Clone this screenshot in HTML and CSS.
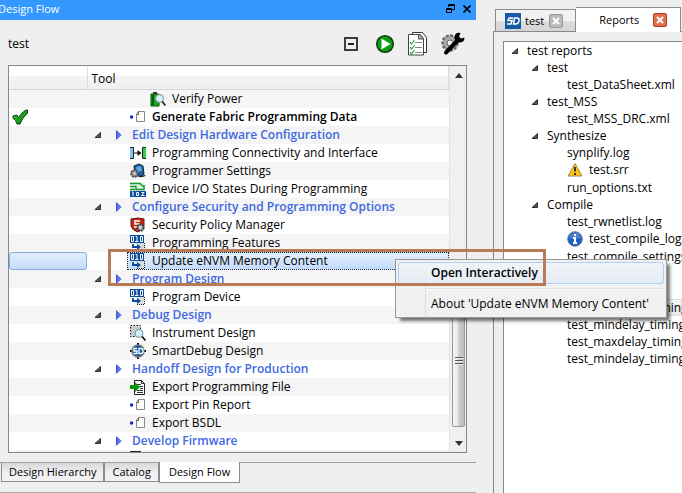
FILE: index.html
```html
<!DOCTYPE html>
<html lang="en">
<head>
<meta charset="utf-8">
<title>Design Flow</title>
<link rel="stylesheet" href="styles.css">
</head>
<body>
<svg class="defs" aria-hidden="true">
  <defs>
    <linearGradient id="tri" x1="0" x2="1"><stop offset="0" stop-color="#3f55e0"/><stop offset="1" stop-color="#7d97f0"/></linearGradient>
    <linearGradient id="leaf" x1="0" x2="1" y2="1"><stop offset="0" stop-color="#2fd02f"/><stop offset="1" stop-color="#067a06"/></linearGradient>
    <symbol id="i-exp" viewBox="0 0 8 8"><path d="M6.500 1.500v5H1z" fill="#555" stroke="#222" stroke-width=".9"/></symbol>
    <symbol id="i-tri" viewBox="0 0 8 12"><path d="M1 1l6 5-6 5z" fill="url(#tri)"/></symbol>
    <symbol id="i-file" viewBox="0 0 16 16"><circle cx="1.600" cy="8" r="1.700" fill="#1a24e8"/><path d="M8.500 2.500h6v10h-8v-8z" fill="#fff" stroke="#888"/><path d="M6.500 5.500h2v-3" fill="none" stroke="#555"/></symbol>
    <symbol id="i-power" viewBox="0 0 16 16"><path d="M1 3h8v12H1z" fill="#12b012" stroke="#0a4a0a"/><path d="M3 1h4v2H3z" fill="#333"/><path d="M3 4v10" stroke="#075f07" stroke-width="2"/><circle cx="9.500" cy="7.500" r="4" fill="#d6f1fb" stroke="#6f8f9b"/><path d="M12.300 10.500l3 4" stroke="#222" stroke-width="1.700"/></symbol>
    <symbol id="i-conn" viewBox="0 0 16 16"><path d="M0 2.500h3.500v11H0" fill="#7cc4f5" stroke="#222"/><path d="M16 2.500h-3.500v11H16" fill="#35cf45" stroke="#222"/><path d="M4 8h6" stroke="#111"/><path d="M7.500 5l4 3-4 3z" fill="#111"/></symbol>
    <symbol id="i-prog" viewBox="0 0 16 16"><path d="M4 3l5-2 4 2 1 8-3 3-6-2z" fill="#1b5fa8" stroke="#122"/><path d="M6 4l5-1 1 5-5 1z" fill="#5ea6e4"/><path d="M10 13q4 1 5-1" fill="none" stroke="#222" stroke-width="1.500"/><circle cx="4.500" cy="10.500" r="3.500" fill="#888" stroke="#444" stroke-width="1.500" stroke-dasharray="2 1"/><circle cx="4.500" cy="10.500" r="1.300" fill="#ddd"/></symbol>
    <symbol id="i-io" viewBox="0 0 16 16"><path d="M0 1h15v9H0z" fill="#e3f6e3"/><path d="M0 2.500h10l3 3M0 5.500h6v3h8V4M0 8.500h5" fill="none" stroke="#159a28" stroke-width="1.400"/><path d="M0 10h16v6H0z" fill="#0b4ea2"/><path d="M2 11h1v4M6.500 11.500h2v3h-2zM11.500 11.500h2.500l-2.500 3h3" stroke="#fff" fill="none"/></symbol>
    <symbol id="i-shield" viewBox="0 0 16 16"><path d="M1 2q7-2 13 0v7q-1 4-6.500 6Q2 13 1 9z" fill="#c92616" stroke="#5a1710"/><path d="M10 4H5v3h4v3H4" fill="none" stroke="#fff" stroke-width="1.500"/><circle cx="10.500" cy="10.500" r="3.300" fill="#999" stroke="#333" stroke-width="1.600" stroke-dasharray="2 .8"/><circle cx="10.500" cy="10.500" r="1.200" fill="#eee"/></symbol>
    <symbol id="i-bin" viewBox="0 0 16 16"><path d="M6.500 7.500h8v8h-8z" fill="#ddd"/><path d="M11 15.500h4M14.500 8v7M7 15.500h3" fill="none" stroke="#222" stroke-dasharray="1 1"/><path d="M0 0h14v8H0z" fill="#0b4b9c"/><path d="M1.500 1.500h2v5h-2zM5.500 1.500h1.500v5M5 6.500h3.500M10.500 1.500h2v5h-2z" fill="none" stroke="#fff"/><path d="M3 9v3h5" fill="none" stroke="#0b4b9c" stroke-width="1.800"/><path d="M7 9l4 3-4 3z" fill="#0b4b9c"/></symbol>
    <symbol id="i-inst" viewBox="0 0 16 16"><path d="M.5.5h10v11H.5z" fill="#ccc" stroke="#111" stroke-dasharray="1.500 1.500"/><circle cx="9" cy="8.500" r="4" fill="#d2f0fa" stroke="#7294a0"/><path d="M12 11.500l3.500 4" stroke="#111" stroke-width="1.800"/></symbol>
    <symbol id="i-sd" viewBox="0 0 16 16"><path d="M8 0v16M0 8h16" stroke="#111" stroke-width="2"/><circle cx="8" cy="8" r="6" fill="#0d5aa8" stroke="#777" stroke-width="1.600"/><path d="M7 5.500H4V8h3v2.500H3.500M9 5.500h2q2 0 2 2.500t-2 2.500H9z" fill="none" stroke="#fff" stroke-width="1.300"/></symbol>
    <symbol id="i-export" viewBox="0 0 16 16"><path d="M4.500 1.500h7l3 3v11h-10z" fill="#fff" stroke="#222"/><path d="M11.500 1.500v3h3M7 5.500h4M9 7.500h4M10 9.500h3M7 11.500h6M7 13.500h6" fill="none" stroke="#333"/><path d="M0 6h5V3l5 5-5 5v-3H0z" fill="#0a960f"/></symbol>
    <symbol id="i-check" viewBox="0 0 16 16"><path d="M1 7l4-1 1.500 2.500Q10 3 14 1h1.500v3Q10 9 8 15H5Q4 11 1 9z" fill="url(#leaf)" stroke="#0c3d0c"/></symbol>
    <symbol id="i-warn" viewBox="0 0 16 16"><path d="M8 1.500L15 14H1z" fill="#ffc414" stroke="#9c8a52" stroke-linejoin="round"/><path d="M8 5v4.500M8 11v2" stroke="#222" stroke-width="1.800"/></symbol>
    <symbol id="i-info" viewBox="0 0 16 16"><circle cx="8" cy="8" r="7.300" fill="#1d5fc4" stroke="#6a7f9c"/><path d="M2 7a6 5.500 0 0 1 12 0q-6 2-12 0z" fill="#fff" opacity=".2"/><path d="M8 3v2M6 7h2v5M6 12h4" fill="none" stroke="#fff" stroke-width="2"/></symbol>
  </defs>
</svg>
<main class="app">
  <section class="flow">
    <header class="titlebar">
      <h1>Design Flow</h1>
      <button aria-label="Float"><svg width="9" height="10" viewBox="0 0 9 10" fill="none" stroke="#000"><path d="M2.500 3V.5h6v5H6M2 1.500h7M.5 4.500h5v4h-5zM0 5.500h6"/></svg></button>
      <button aria-label="Close"><svg width="8" height="8" viewBox="0 0 8 8"><path d="M.5.5l7 7m0-7l-7 7" stroke="#000" stroke-width="1.600"/></svg></button>
    </header>
    <div class="toolbar">
      <span class="project">test</span>
      <button aria-label="Collapse all"><svg width="14" height="14" viewBox="0 0 14 14"><path d="M1 1h12v12H1z" fill="#efefef" stroke="#3d3d3d" stroke-width="2"/><path d="M4 7h6" stroke="#222" stroke-width="2"/></svg></button>
      <button aria-label="Run"><svg width="20" height="20" viewBox="0 0 20 20"><circle cx="10" cy="10" r="8.300" fill="#0b9d12" stroke="#123c14" stroke-width="1.600"/><path d="M6.500 4.500l9 5.500-9 5.500z" fill="#fff"/></svg></button>
      <button aria-label="Reports"><svg width="20" height="24" viewBox="0 0 20 24"><path d="M4.500.5h10l4 5v15h-14z" fill="#fff" stroke="#333"/><path d="M.5 2.500h12l3 4v16.500H.5z" fill="#fff" stroke="#444"/><path d="M10.500 2v5h5z" fill="#bbb" stroke="#555"/><path d="M7 10.500h7M7 15.500h7M7 20.500h7" stroke="#888"/><path d="M2 10l1.500 2L6.500 8M2 15l1.500 2L6.500 13M2 20l1.500 2L6.500 18" fill="none" stroke="#27a83a" stroke-width="1.200"/></svg></button>
      <button aria-label="Options"><svg width="24" height="24" viewBox="0 0 24 24"><circle cx="9" cy="11" r="7.500" fill="#aaa" stroke="#666" stroke-width="2.400" stroke-dasharray="3 1.400"/><circle cx="9" cy="11" r="3" fill="#efefef" stroke="#666"/><path d="M5 20.500L17 8" stroke="#000" stroke-width="4" stroke-linecap="round"/><path d="M19.500 1q-6-1-6 5 .5 4 5 4.500 5 0 5-5l-3.500 1-2-2z" fill="#000"/></svg></button>
    </div>
    <div class="tree">
      <table>
        <colgroup><col class="status"><col></colgroup>
        <thead><tr><th></th><th>Tool</th></tr></thead>
        <tbody>
          <tr><td></td><td><div class="node deep"><svg><use href="#i-power"/></svg>Verify Power</div></td></tr>
          <tr><td><svg class="check"><use href="#i-check"/></svg></td><td><div class="node leaf strong"><svg><use href="#i-file"/></svg>Generate Fabric Programming Data</div></td></tr>
          <tr><td></td><td><div class="node group"><svg><use href="#i-exp"/></svg><svg><use href="#i-tri"/></svg>Edit Design Hardware Configuration</div></td></tr>
          <tr><td></td><td><div class="node leaf"><svg><use href="#i-conn"/></svg>Programming Connectivity and Interface</div></td></tr>
          <tr><td></td><td><div class="node leaf"><svg><use href="#i-prog"/></svg>Programmer Settings</div></td></tr>
          <tr><td></td><td><div class="node leaf"><svg><use href="#i-io"/></svg>Device I/O States During Programming</div></td></tr>
          <tr><td></td><td><div class="node group"><svg><use href="#i-exp"/></svg><svg><use href="#i-tri"/></svg>Configure Security and Programming Options</div></td></tr>
          <tr><td></td><td><div class="node leaf"><svg><use href="#i-shield"/></svg>Security Policy Manager</div></td></tr>
          <tr><td></td><td><div class="node leaf"><svg><use href="#i-bin"/></svg>Programming Features</div></td></tr>
          <tr class="selected"><td><div class="cellmark"></div></td><td><div class="node leaf"><svg><use href="#i-bin"/></svg>Update eNVM Memory Content</div></td></tr>
          <tr><td></td><td><div class="node group"><svg><use href="#i-exp"/></svg><svg><use href="#i-tri"/></svg>Program Design</div></td></tr>
          <tr><td></td><td><div class="node leaf"><svg><use href="#i-bin"/></svg>Program Device</div></td></tr>
          <tr><td></td><td><div class="node group"><svg><use href="#i-exp"/></svg><svg><use href="#i-tri"/></svg>Debug Design</div></td></tr>
          <tr><td></td><td><div class="node leaf"><svg><use href="#i-inst"/></svg>Instrument Design</div></td></tr>
          <tr><td></td><td><div class="node leaf"><svg><use href="#i-sd"/></svg>SmartDebug Design</div></td></tr>
          <tr><td></td><td><div class="node group"><svg><use href="#i-exp"/></svg><svg><use href="#i-tri"/></svg>Handoff Design for Production</div></td></tr>
          <tr><td></td><td><div class="node leaf"><svg><use href="#i-export"/></svg>Export Programming File</div></td></tr>
          <tr><td></td><td><div class="node leaf"><svg><use href="#i-file"/></svg>Export Pin Report</div></td></tr>
          <tr><td></td><td><div class="node leaf"><svg><use href="#i-file"/></svg>Export BSDL</div></td></tr>
          <tr><td></td><td><div class="node group"><svg><use href="#i-exp"/></svg><svg><use href="#i-tri"/></svg>Develop Firmware</div></td></tr>
          <tr><td></td><td><div class="node leaf"><svg viewBox="0 0 16 16"><path d="M0 0h11v8H0z" fill="#222"/></svg></div></td></tr>
        </tbody>
      </table>
      <div class="scrollbar">
        <svg width="8" height="5" viewBox="0 0 8 5"><path d="M4 0l4 5H0z" fill="#333"/></svg>
        <div class="track"><div class="thumb"><i></i><i></i><i></i></div></div>
        <svg width="8" height="5" viewBox="0 0 8 5"><path d="M4 5l4-5H0z" fill="#333"/></svg>
      </div>
    </div>
    <nav class="bottom-tabs">
      <button>Design Hierarchy</button><button>Catalog</button><button class="active">Design Flow</button>
    </nav>
  </section>
  <section class="docs">
    <nav class="doc-tabs">
      <div class="tab"><svg width="16" height="16" viewBox="0 0 16 16"><path d="M0 0h16v16H0z" fill="#135ba8"/><path d="M8 5H4L3 7.500h4L6 11H2M9.500 5H12q2.500 0 2 3t-3.500 3H8.500z" fill="none" stroke="#fff" stroke-width="1.500"/></svg><a href="#test">test</a><button class="x" aria-label="Close test"><svg width="8" height="8" viewBox="0 0 8 8"><path d="M1 1l6 6m0-6L1 7" stroke="#fff" stroke-width="2"/></svg></button></div>
      <div class="tab active"><a href="#reports">Reports</a><button class="x" aria-label="Close Reports"><svg width="8" height="8" viewBox="0 0 8 8"><path d="M1 1l6 6m0-6L1 7" stroke="#fff" stroke-width="2"/></svg></button></div>
    </nav>
    <div class="doc-body">
      <ul class="reports">
        <li><svg><use href="#i-exp"/></svg>test reports</li>
        <li class="l1"><svg><use href="#i-exp"/></svg>test</li>
        <li class="l2">test_DataSheet.xml</li>
        <li class="l1"><svg><use href="#i-exp"/></svg>test_MSS</li>
        <li class="l2">test_MSS_DRC.xml</li>
        <li class="l1"><svg><use href="#i-exp"/></svg>Synthesize</li>
        <li class="l2">synplify.log</li>
        <li class="l2 flag"><svg><use href="#i-warn"/></svg>test.srr</li>
        <li class="l2">run_options.txt</li>
        <li class="l1"><svg><use href="#i-exp"/></svg>Compile</li>
        <li class="l2">test_rwnetlist.log</li>
        <li class="l2 flag"><svg><use href="#i-info"/></svg>test_compile_log.log</li>
        <li class="l2">test_compile_settings.txt</li>
        <li></li>
        <li></li>
        <li class="l2 current">test_maxdelay_timing_</li>
        <li class="l2">test_mindelay_timing_</li>
        <li class="l2">test_maxdelay_timing_</li>
        <li class="l2">test_mindelay_timing_</li>
      </ul>
    </div>
  </section>
</main>
<div class="menu" role="menu">
  <button class="hot" role="menuitem">Open Interactively</button>
  <hr>
  <button role="menuitem">About 'Update eNVM Memory Content'</button>
</div>
<div class="callout"></div>
</body>
</html>
```
FILE: styles.css
```css
* { box-sizing: border-box; }
body {
  margin: 0;
  height: 100vh;
  overflow: hidden;
  background: #efefef;
  color: #000;
  font: 12px/16px "Open Sans", "Noto Sans", sans-serif;
}
button { font: inherit; color: inherit; border: 0; padding: 0; background: none; }
a { color: inherit; text-decoration: none; }
svg { flex: none; display: block; }
.defs { position: absolute; width: 0; height: 0; }

.app { display: grid; grid-template-columns: 476fr 206fr; height: 100%; }
.flow { display: flex; flex-direction: column; min-width: 0; min-height: 0; border-bottom: 1px solid #aaa; }
.titlebar { display: flex; align-items: center; gap: 8px; height: 20px; padding: 0 5px 2px 0; background: #39f; color: #fff; }
.titlebar h1 { flex: 1; margin: 0 0 0 -2px; font: inherit; font-size: 11px; }
.toolbar { display: flex; align-items: center; height: 45px; padding: 3px 11px 0 8px; gap: 13px; }
.toolbar .project { flex: 1; }
.toolbar button:nth-of-type(1) { margin-right: 4px; }

.tree { flex: 1; min-height: 0; display: flex; margin: 0 9px 0 8px; border: 1px solid #828790; background: #fff; overflow: hidden; }
.tree table { flex: 1; border-collapse: collapse; table-layout: fixed; align-self: flex-start; }
.tree col.status { width: 78px; }
th { height: 23px; padding: 3px 4px 0; text-align: left; font-weight: 400; background: linear-gradient(#fff 40%, #f3f4f6 45%, #efefef); border-bottom: 1px solid #d5d5d5; border-right: 1px solid #dfdfdf; }
td { height: 18px; padding: 0; white-space: nowrap; }
tbody tr:nth-child(odd) { background: #f5f5f5; }
tbody tr:nth-child(even) { background: #fff; }
.node { display: flex; align-items: center; height: 18px; }
.node svg { width: 16px; height: 16px; margin-right: 6px; }
.leaf { padding-left: 43px; }
.deep { padding-left: 63px; }
.strong { font-weight: 600; }
.group { padding-left: 7px; font-weight: 600; color: #4169e1; }
.group svg:nth-child(1) { width: 8px; height: 8px; margin-right: 13px; }
.group svg:nth-child(2) { width: 8px; height: 12px; margin-right: 9px; }
.check { width: 16px; height: 16px; margin-left: 3px; }
.selected .node { margin-left: 40px; padding-left: 2px; border: 1px dotted #224; background: linear-gradient(#e3effd, #c3dcfa); }
.cellmark { height: 18px; border: 1px solid #84acdd; border-radius: 3px; background: linear-gradient(#e3effd, #c3dcfa); }

.scrollbar { width: 17px; display: flex; flex-direction: column; align-items: center; padding: 7px 0 6px 2px; background: #f0f0f0; border-left: 1px solid #e3e3e3; }
.track { flex: 1; width: 100%; display: flex; flex-direction: column; justify-content: flex-end; padding: 0 1px 14px 0; }
.thumb { height: 38%; display: flex; flex-direction: column; align-items: center; justify-content: center; gap: 1px; border: 1px solid #979797; border-radius: 2px; background: linear-gradient(90deg, #f5f5f5, #e9e9eb 45%, #cfcfd2 50%, #bcbcc0); }
.thumb i { width: 8px; height: 2px; background: #555; border-bottom: 1px solid #eee; }

.bottom-tabs { display: flex; align-items: flex-start; height: 30px; margin-top: 9px; padding-left: 1px; border-top: 1px solid #a0a0a0; font-size: 11px; }
.bottom-tabs button { height: 19px; padding: 0 7px; border: solid #898c95; border-width: 0 1px 1px; background: linear-gradient(#d8d8d8, #f2f2f2 60%); white-space: nowrap; }
.bottom-tabs .active { height: 21px; padding: 0 9px; margin-top: -1px; background: #fff; }

.docs { display: flex; flex-direction: column; min-width: 0; padding: 7px 0 0 17px; }
.doc-tabs { display: flex; align-items: flex-end; height: 24px; padding-left: 2px; font-size: 11px; }
.tab { display: flex; align-items: center; height: 22px; padding: 0 12px 0 9px; border: 1px solid #898c95; border-bottom: 0; background: linear-gradient(#f2f2f2 50%, #dcdcdc 55%, #d4d4d4); }
.tab a { margin: 0 5px 0 4px; }
.tab.active { height: 25px; margin: 0 0 -1px; padding: 0 13px 0 19px; border-left: 0; background: #fff; z-index: 1; }
.tab.active a { margin-right: 14px; }
.x { display: grid; place-items: center; width: 14px; height: 14px; border: 1px solid #999; border-radius: 2px; background: #bbb; }
.active .x { border-color: #b23a20; background: #e0714f; }
.doc-body { flex: 1; min-height: 0; padding: 9px 0 0 9px; border: solid #828790; border-width: 1px 0 0 1px; }
.reports { list-style: none; height: 100%; margin: 0; padding: 0; border: solid #828790; border-width: 1px 0 0 1px; background: #fff; overflow: hidden; }
.reports li { display: flex; align-items: center; height: 17px; padding-left: 7px; white-space: nowrap; }
.reports li svg { width: 8px; height: 8px; margin-right: 8px; }
.reports .l1 { padding-left: 27px; }
.reports .l2 { padding-left: 63px; }
.reports .flag { height: 18px; }
.reports .flag svg { width: 16px; height: 16px; margin-right: 6px; }
.reports .current { border: 1px solid #ddd; padding-left: 62px; background: linear-gradient(#f8f8f8, #e8e8e8); }

.menu { position: absolute; left: 395px; top: 259px; padding: 2px; border: 1px solid #979797; background: linear-gradient(90deg, #f1f1f1 29px, #dedede 29px, #dedede 30px, #f1f1f1 30px); box-shadow: 4px 4px 3px -1px #0008; white-space: nowrap; }
.menu button { display: block; width: 100%; height: 22px; padding: 0 14px 0 32px; text-align: left; border: 1px solid transparent; border-radius: 3px; }
.menu .hot { font-weight: 600; border-color: #aecff7; background: linear-gradient(#f0f4f9cc, #e3ebf5cc); }
.menu hr { height: 2px; margin: 4px 0 3px 29px; border: 0; border-top: 1px solid #dedede; background: #fff; }
.callout { position: absolute; left: 108px; top: 249px; width: 438px; height: 37px; border: 3px solid #b97a56; pointer-events: none; }
```
